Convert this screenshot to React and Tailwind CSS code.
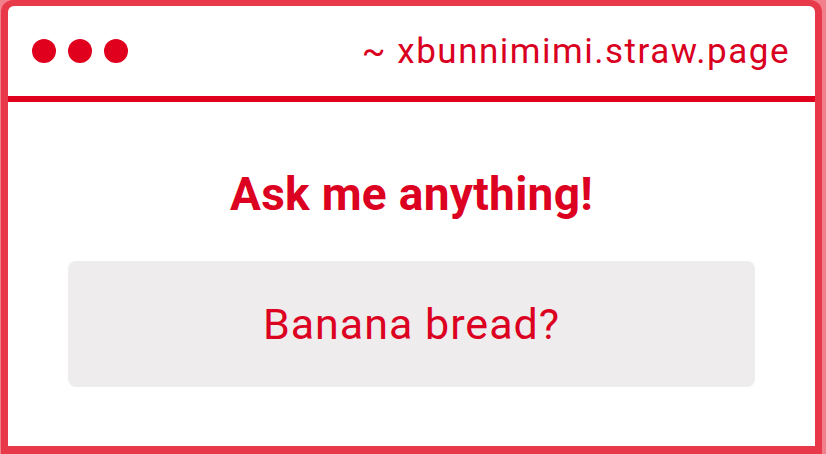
export default function App() {
  return (
    <div className="w-[826px] h-[454px] overflow-hidden bg-[#f27f8c] font-['Roboto',_'Liberation_Sans',_sans-serif]">
      <div className="ml-[1px] w-[821px] h-[454px] bg-[#e8394a] pt-[6px] pl-[7px] pr-[7px] pb-[8px] rounded-t-[12px]">
        <div className="h-full bg-white rounded-t-[6px] flex flex-col">
          {/* header */}
          <div className="h-[90px] flex items-center justify-between pl-[24px] pr-[25px]">
            <div className="flex items-center gap-[12px]">
              <span className="w-[24px] h-[24px] rounded-full bg-[#e0001e]"></span>
              <span className="w-[24px] h-[24px] rounded-full bg-[#e0001e]"></span>
              <span className="w-[24px] h-[24px] rounded-full bg-[#e0001e]"></span>
            </div>
            <div className="text-[35px] tracking-[1.5px] text-[#d9001f] leading-none">~ xbunnimimi.straw.page</div>
          </div>
          <div className="h-[6px] bg-[#e0001e]"></div>
          {/* body */}
          <div className="flex-1 flex flex-col items-center pt-[69px]">
            <h1 className="text-[46px] font-bold tracking-[0.3px] text-[#dc0021] leading-none">Ask me anything!</h1>
            <div className="mt-[44px] w-[687px] h-[126px] rounded-[8px] bg-[#eeeced] flex items-center justify-center">
              <span className="text-[43px] tracking-[1px] text-[#dc0021] leading-none">Banana bread?</span>
            </div>
          </div>
        </div>
      </div>
    </div>
  );
}
